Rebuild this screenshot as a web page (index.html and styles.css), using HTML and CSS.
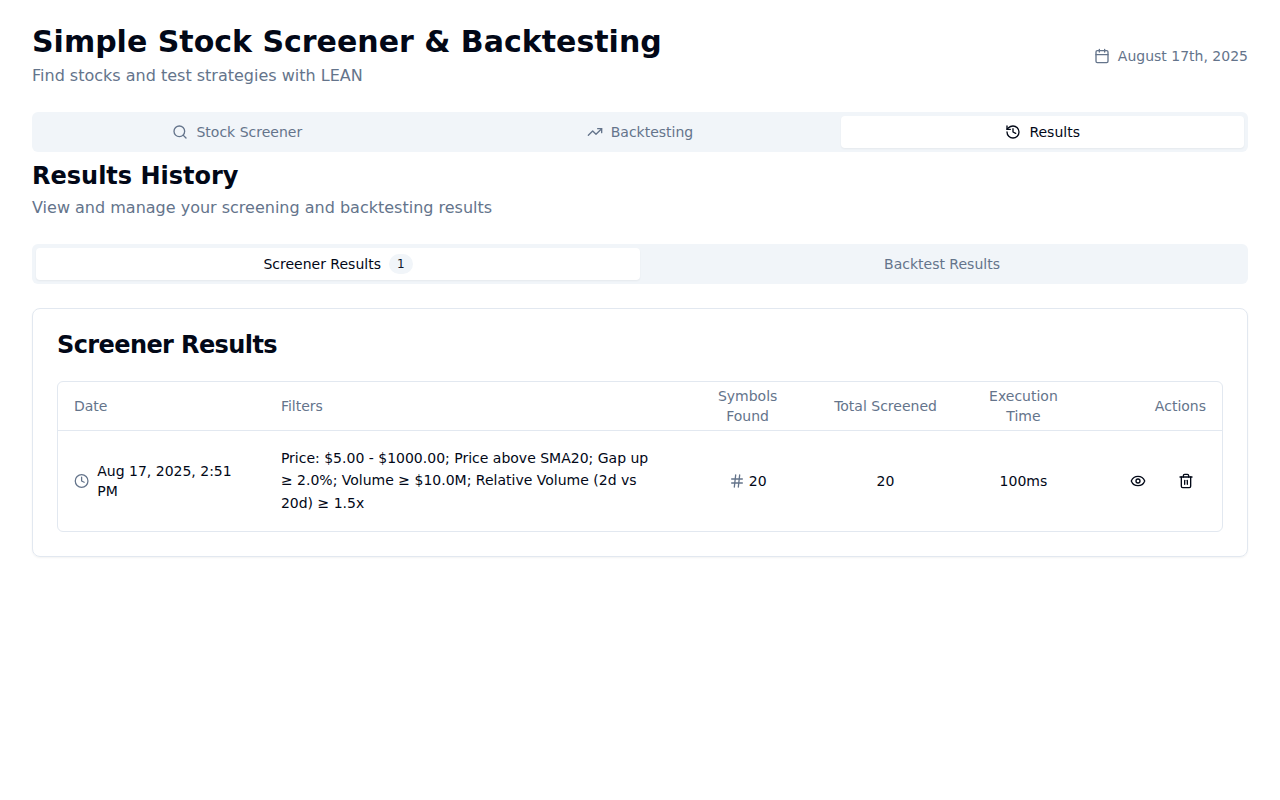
FILE: index.html
```html
<!DOCTYPE html>
<html lang="en">
<head>
<meta charset="utf-8">
<title>Simple Stock Screener &amp; Backtesting</title>
<link rel="stylesheet" href="styles.css">
</head>
<body>
<main class="page">
  <header class="page-header">
    <div>
      <h1 class="page-title">Simple Stock Screener &amp; Backtesting</h1>
      <p class="subtitle">Find stocks and test strategies with LEAN</p>
    </div>
    <div class="today">
      <svg class="icon" viewBox="0 0 24 24"><path d="M8 2v4M16 2v4"/><rect width="18" height="18" x="3" y="4" rx="2"/><path d="M3 10h18"/></svg>
      <span>August 17th, 2025</span>
    </div>
  </header>

  <nav class="tabs tabs-main">
    <button class="tab"><svg class="icon" viewBox="0 0 24 24"><circle cx="11" cy="11" r="8"/><path d="m21 21-4.3-4.3"/></svg>Stock Screener</button>
    <button class="tab"><svg class="icon" viewBox="0 0 24 24"><path d="M22 7 13.5 15.5 8.5 10.5 2 17"/><path d="M16 7h6v6"/></svg>Backtesting</button>
    <button class="tab active"><svg class="icon" viewBox="0 0 24 24"><path d="M3 12a9 9 0 1 0 9-9 9.75 9.75 0 0 0-6.74 2.74L3 8"/><path d="M3 3v5h5"/><path d="M12 7v5l4 2"/></svg>Results</button>
  </nav>

  <section class="results">
    <h2 class="section-title">Results History</h2>
    <p class="subtitle">View and manage your screening and backtesting results</p>

    <nav class="tabs tabs-results">
      <button class="tab active">Screener Results<span class="badge">1</span></button>
      <button class="tab">Backtest Results</button>
    </nav>

    <article class="card">
      <h3 class="card-title">Screener Results</h3>
      <div class="table-frame">
        <table class="table">
          <colgroup><col class="col-date"><col class="col-filters"><col class="col-number"><col class="col-number"><col class="col-number"><col></colgroup>
          <thead>
            <tr><th>Date</th><th>Filters</th><th class="center">Symbols Found</th><th class="center">Total Screened</th><th class="center">Execution Time</th><th class="right">Actions</th></tr>
          </thead>
          <tbody>
            <tr>
              <td><div class="date-cell"><svg class="icon muted" viewBox="0 0 24 24"><circle cx="12" cy="12" r="10"/><path d="M12 6v6l4 2"/></svg><span>Aug 17, 2025, 2:51 PM</span></div></td>
              <td><div class="filters">Price: $5.00 - $1000.00; Price above SMA20; Gap up ≥ 2.0%; Volume ≥ $10.0M; Relative Volume (2d vs 20d) ≥ 1.5x</div></td>
              <td><div class="count-cell"><svg class="icon muted" viewBox="0 0 24 24"><path d="M4 9h16M4 15h16M10 3 8 21M16 3l-2 18"/></svg><span>20</span></div></td>
              <td class="center">20</td>
              <td class="center">100ms</td>
              <td>
                <div class="actions">
                  <button class="icon-button" aria-label="View"><svg class="icon" viewBox="0 0 24 24"><path d="M2.062 12.348a1 1 0 0 1 0-.696 10.75 10.75 0 0 1 19.876 0 1 1 0 0 1 0 .696 10.75 10.75 0 0 1-19.876 0"/><circle cx="12" cy="12" r="3"/></svg></button>
                  <button class="icon-button" aria-label="Delete"><svg class="icon" viewBox="0 0 24 24"><path d="M3 6h18"/><path d="M19 6v14c0 1-1 2-2 2H7c-1 0-2-1-2-2V6"/><path d="M8 6V4c0-1 1-2 2-2h4c1 0 2 1 2 2v2"/><path d="M10 11v6"/><path d="M14 11v6"/></svg></button>
                </div>
              </td>
            </tr>
          </tbody>
        </table>
      </div>
    </article>
  </section>
</main>
</body>
</html>
```
FILE: styles.css
```css
* { box-sizing: border-box; margin: 0; padding: 0; }

body {
  background: #fff;
  color: #020817;
  font-family: "DejaVu Sans", sans-serif;
  font-size: 16px;
  line-height: 24px;
}

button { border: 0; background: none; color: inherit; font: inherit; }

.page { padding: 24px 32px; }

.icon {
  width: 16px;
  height: 16px;
  fill: none;
  stroke: currentColor;
  stroke-width: 2;
  stroke-linecap: round;
  stroke-linejoin: round;
}

.muted, .subtitle, .today { color: #64748b; }

.page-header { display: flex; align-items: center; justify-content: space-between; }
.page-title { font-size: 30px; line-height: 36px; font-weight: 700; }
.subtitle { margin-top: 4px; }
.today { display: flex; align-items: center; gap: 8px; font-size: 14px; line-height: 20px; }

.tabs {
  display: grid;
  height: 40px;
  margin-top: 24px;
  padding: 4px;
  border-radius: 6px;
  background: #f1f5f9;
  color: #64748b;
}
.tabs-main { grid-template-columns: repeat(3, 1fr); }
.tabs-results { grid-template-columns: repeat(2, 1fr); }
.tab {
  display: flex;
  align-items: center;
  justify-content: center;
  gap: 8px;
  border-radius: 4px;
  font-size: 14px;
  line-height: 20px;
}
.tab.active { background: #fff; color: #020817; box-shadow: 0 1px 2px rgba(0, 0, 0, 0.05); }
.badge {
  padding: 2px 8px;
  border-radius: 10px;
  background: #f1f5f9;
  color: #0f172a;
  font-size: 12px;
  line-height: 16px;
}

.results { margin-top: 8px; }
.section-title { font-size: 24px; line-height: 32px; font-weight: 700; }

.card {
  margin-top: 24px;
  padding: 24px;
  border: 1px solid #e2e8f0;
  border-radius: 8px;
  box-shadow: 0 1px 2px rgba(0, 0, 0, 0.05);
}
.card-title {
  margin-bottom: 24px;
  font-size: 24px;
  line-height: 24px;
  font-weight: 600;
  letter-spacing: -0.025em;
}

.table-frame { border: 1px solid #e2e8f0; border-radius: 6px; }
.table {
  width: 100%;
  table-layout: fixed;
  border-collapse: collapse;
  font-size: 14px;
  line-height: 20px;
}
.col-date { width: 206.9px; }
.col-filters { width: 413.8px; }
.col-number { width: 137.9px; }
.table thead tr { border-bottom: 1px solid #e2e8f0; }
.table th { height: 48px; padding: 0 16px; color: #64748b; font-weight: 500; text-align: left; }
.table td { padding: 16px; vertical-align: middle; }
.table .center { text-align: center; }
.table .right { text-align: right; }

.date-cell { display: flex; align-items: center; gap: 8px; }
.filters { line-height: 22.75px; }
.count-cell { display: flex; align-items: center; justify-content: center; gap: 4px; }
.actions { display: flex; justify-content: flex-end; gap: 8px; }
.icon-button { display: flex; align-items: center; justify-content: center; width: 40px; height: 40px; }
```
